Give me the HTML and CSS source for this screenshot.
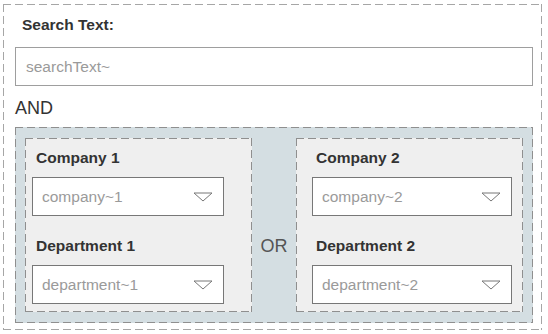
FILE: index.html
```html
<!DOCTYPE html>
<html lang="en">

<head>
    <meta charset="UTF-8">
    <meta name="viewport" content="width=device-width, initial-scale=1.0">
    <title>Search filter</title>

    <link rel="stylesheet" href="styles.css">
</head>

<body>

    <form class="filter dashed">

        <div class="filter__title">Search Text:</div>
        <div class="field field--text">searchText~</div>

        <div class="filter__op">AND</div>

        <div class="group dashed">

            <div class="group__panel group__panel--first dashed">
                <label class="group__label">Company 1</label>
                <div class="field field--select">
                    <span>company~1</span>
                    <svg width="20" height="10" viewBox="0 0 20 10"><polygon points="1,1 19,1 10,9" /></svg>
                </div>
                <label class="group__label group__label--low">Department 1</label>
                <div class="field field--select field--low">
                    <span>department~1</span>
                    <svg width="20" height="10" viewBox="0 0 20 10"><polygon points="1,1 19,1 10,9" /></svg>
                </div>
            </div>
            <!--/group__panel-->

            <div class="group__or">OR</div>

            <div class="group__panel group__panel--second dashed">
                <label class="group__label">Company 2</label>
                <div class="field field--select">
                    <span>company~2</span>
                    <svg width="20" height="10" viewBox="0 0 20 10"><polygon points="1,1 19,1 10,9" /></svg>
                </div>
                <label class="group__label group__label--low">Department 2</label>
                <div class="field field--select field--low">
                    <span>department~2</span>
                    <svg width="20" height="10" viewBox="0 0 20 10"><polygon points="1,1 19,1 10,9" /></svg>
                </div>
            </div>
            <!--/group__panel-->

        </div>
        <!--/group-->

    </form>

</body>

</html>
```

FILE: styles.css
```css
* {
    box-sizing: border-box;
}

body {
    margin: 0;
    background: #fff;
    font-family: "Liberation Sans", Arial, sans-serif;
    color: #333;
}

/* dashed frame drawn with gradients, 8px dash / 4px gap */

.dashed {
    --dash: #a6a6a6;
    background-image:
        repeating-linear-gradient(90deg, var(--dash) 0 8px, transparent 8px 12px),
        repeating-linear-gradient(90deg, var(--dash) 0 8px, transparent 8px 12px),
        repeating-linear-gradient(180deg, var(--dash) 0 8px, transparent 8px 12px),
        repeating-linear-gradient(180deg, var(--dash) 0 8px, transparent 8px 12px);
    background-size: 100% 1px, 100% 1px, 1px 100%, 1px 100%;
    background-position: 0 0, 0 100%, 0 0, 100% 0;
    background-repeat: no-repeat;
}

.filter {
    display: flex;
    flex-direction: column;
    width: 539px;
    height: 326px;
    margin: 4px 0 0 3px;
    padding: 1px 9px 0 12px;
}

.filter__title {
    margin-top: 10px;
    padding-left: 7px;
    font-size: 15.5px;
    font-weight: bold;
    line-height: 20px;
}

.filter__op {
    margin-top: 11px;
    font-size: 18px;
    line-height: 22px;
}

.field {
    display: flex;
    align-items: center;
    height: 39px;
    background: #fff;
    font-size: 15.5px;
    color: #9a9a9a;
}

.field--text {
    margin-top: 12px;
    padding-left: 10px;
    border: 1px solid #9e9e9e;
}

.field--select {
    justify-content: space-between;
    margin-top: 9px;
    padding: 0 10px 0 9px;
    border: 1px solid #777;
}

.field--select svg {
    display: block;
}

.field--select polygon {
    fill: none;
    stroke: #777;
    stroke-width: 1;
}

.field--low {
    margin-top: 9px;
}

.group {
    --dash: #8f8f8f;
    display: flex;
    margin-top: 8px;
    padding: 11px 10px 11px 10px;
    background-color: #d4dee2;
}

.group__panel {
    --dash: #8f8f8f;
    display: flex;
    flex-direction: column;
    width: 227px;
    height: 174px;
    padding-top: 10px;
    background-color: #efefef;
}

.group__panel--first {
    padding-left: 7px;
}

.group__panel--first .field {
    width: 192px;
}

.group__panel--second {
    padding-left: 16px;
}

.group__panel--second .field {
    width: 200px;
}

.group__label {
    padding-left: 4px;
    font-size: 15.5px;
    font-weight: bold;
    line-height: 20px;
}

.group__label--low {
    margin-top: 20px;
}

.group__or {
    flex: 1;
    padding-top: 97px;
    text-align: center;
    font-size: 18px;
    line-height: 22px;
    color: #555;
}
```
